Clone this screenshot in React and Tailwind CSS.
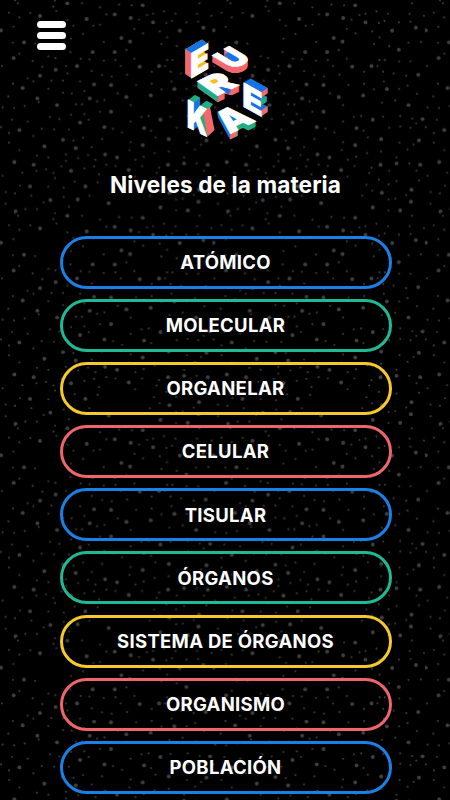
import React from 'react';

const NIVELES = [
    { id: 1, nombre: 'ATÓMICO', borde: 'border-[#1a80e6]' },
    { id: 2, nombre: 'MOLECULAR', borde: 'border-[#1fb993]' },
    { id: 3, nombre: 'ORGANELAR', borde: 'border-[#f5c92c]' },
    { id: 4, nombre: 'CELULAR', borde: 'border-[#ee666b]' },
    { id: 5, nombre: 'TISULAR', borde: 'border-[#1a80e6]' },
    { id: 6, nombre: 'ÓRGANOS', borde: 'border-[#1fb993]' },
    { id: 7, nombre: 'SISTEMA DE ÓRGANOS', borde: 'border-[#f5c92c]' },
    { id: 8, nombre: 'ORGANISMO', borde: 'border-[#ee666b]' },
    { id: 9, nombre: 'POBLACIÓN', borde: 'border-[#1a80e6]' },
];

// Estrellas de un mosaico de 637x637 (se dibuja a un tercio de escala)
const ESTRELLAS_GRANDES = [
    [202, 10], [428, 16], [120, 48], [344, 43], [260, 57], [392, 54], [3, 91], [364, 114], [390, 125], [72, 127],
    [278, 156], [344, 156], [41, 174], [231, 198], [419, 200], [167, 209], [120, 227], [282, 253], [333, 255], [68, 264],
    [379, 291], [269, 295], [112, 295], [171, 315], [333, 335], [240, 368], [313, 381], [58, 390], [432, 384], [189, 419],
    [428, 435], [133, 439], [227, 444], [315, 463], [351, 472], [43, 486], [101, 494], [213, 512], [386, 510], [90, 559],
    [256, 559], [151, 600], [233, 598], [326, 609], [47, 634], [459, 67], [539, 92], [610, 83], [559, 149], [477, 198],
    [617, 224], [523, 267], [452, 286], [588, 315], [481, 359], [630, 357], [506, 417], [619, 421], [504, 494], [552, 490],
    [623, 494], [508, 578], [597, 569], [481, 622], [563, 631], [595, 605],
];

const ESTRELLAS_CHICAS = [
    [54, 10], [45, 1], [165, 2], [160, 20], [169, 33], [246, 10], [27, 38], [58, 52], [91, 39], [202, 60],
    [220, 77], [300, 22], [319, 43], [357, 14], [395, 16], [300, 74], [280, 77], [403, 87], [417, 59], [441, 45],
    [429, 100], [249, 102], [213, 116], [40, 80], [39, 128], [105, 131], [58, 161], [98, 183], [145, 169], [166, 174],
    [211, 156], [242, 176], [268, 178], [311, 126], [379, 150], [403, 176], [346, 180], [311, 182], [198, 198], [127, 200],
    [6, 198], [202, 220], [275, 213], [306, 225], [335, 229], [362, 198], [381, 224], [83, 235], [100, 244], [39, 251],
    [154, 242], [189, 242], [240, 244], [145, 266], [253, 273], [189, 278], [215, 280], [25, 289], [116, 306], [8, 322],
    [42, 324], [74, 318], [228, 313], [246, 313], [291, 304], [313, 300], [353, 280], [408, 255], [392, 315], [213, 344],
    [253, 342], [300, 335], [36, 359], [83, 364], [150, 351], [178, 357], [266, 359], [424, 351], [446, 348], [392, 364],
    [3, 381], [125, 386], [162, 388], [207, 388], [339, 386], [366, 397], [27, 399], [100, 408], [220, 422], [249, 413],
    [306, 417], [27, 428], [275, 441], [58, 450], [111, 466], [145, 472], [198, 463], [198, 483], [234, 474], [264, 465],
    [286, 479], [184, 499], [138, 508], [109, 512], [67, 518], [8, 527], [160, 519], [165, 534], [253, 505], [282, 499],
    [319, 494], [346, 498], [297, 523], [388, 450], [392, 426], [406, 479], [426, 498], [431, 470], [405, 530], [224, 545],
    [293, 547], [60, 557], [145, 560], [191, 563], [191, 591], [94, 587], [17, 576], [45, 580], [268, 587], [17, 611],
    [131, 607], [207, 620], [76, 627], [111, 627], [459, 41], [492, 34], [526, 41], [559, 67], [516, 63], [499, 69],
    [479, 94], [501, 112], [484, 132], [530, 138], [588, 128], [625, 126], [591, 41], [594, 65], [598, 10], [634, 47],
    [560, 184], [594, 184], [501, 180], [517, 180], [495, 198], [512, 215], [455, 215], [543, 220], [581, 227], [455, 251],
    [514, 244], [484, 268], [560, 267], [585, 257], [613, 281], [548, 301], [508, 308], [512, 350], [563, 348], [530, 383],
    [563, 379], [594, 383], [599, 356], [611, 370], [453, 392], [466, 412], [561, 428], [506, 454], [464, 459], [552, 472],
    [585, 448], [603, 434], [590, 490], [477, 503], [470, 519], [530, 512], [612, 512], [552, 543], [499, 538], [528, 553],
    [462, 554], [619, 541], [581, 585], [449, 587], [528, 598], [548, 596], [479, 572], [528, 631],
];

const FondoEstrellas = () => (
    <svg className="absolute inset-0 h-full w-full" aria-hidden="true">
        <defs>
            <pattern id="estrellas" width="637" height="637" patternUnits="userSpaceOnUse" patternTransform="scale(0.3335)">
                {ESTRELLAS_GRANDES.map(([x, y]) => (
                    <circle key={`g${x}-${y}`} cx={x} cy={y} r="5.8" fill="#3f3f3f" />
                ))}
                {ESTRELLAS_CHICAS.map(([x, y]) => (
                    <circle key={`c${x}-${y}`} cx={x} cy={y} r="3.2" fill="#383838" />
                ))}
            </pattern>
        </defs>
        <rect width="100%" height="100%" fill="url(#estrellas)" />
    </svg>
);

const AZUL = '#1573e6';
const ROJO = '#f4676c';
const VERDE = '#1fae83';
const AMARILLO = '#f3bf1b';

// Letra isométrica: origen = esquina inferior izquierda, ejeX = ancho, ejeY = alto hacia abajo
const Letra = ({ letra, origen, ejeX, ejeY, margen, ancho, fondo, lado, children }) => {
    const a = ejeX[0] / ancho;
    const b = ejeX[1] / ancho;
    const c = ejeY[0] / 72.7;
    const d = ejeY[1] / 72.7;
    const e = origen[0] - a * margen;
    const f = origen[1] - b * margen;
    const capas = [];
    for (let t = 1; t > 0; t -= 0.08) {
        capas.push(t);
    }
    return (
        <g fontFamily="Inter, sans-serif" fontSize="100" fontWeight="900">
            {capas.map((t) => (
                <text key={t} fill={lado} transform={`matrix(${a} ${b} ${c} ${d} ${e + fondo[0] * t} ${f + fondo[1] * t})`}>
                    {letra}
                </text>
            ))}
            {children}
            <text fill="#ffffff" stroke="#ffffff" strokeWidth="2" transform={`matrix(${a} ${b} ${c} ${d} ${e} ${f})`}>{letra}</text>
        </g>
    );
};

const Logo = () => (
    <svg className="h-[110px] w-[92px] overflow-visible" viewBox="180 34 92 110" role="img" aria-label="Eureka">
        <Letra letra="U" origen={[234.5, 69]} ejeX={[18, -10]} ejeY={[22.5, 13.5]} margen={5} ancho={66} fondo={[0, 6.5]} lado={ROJO}>
            <polygon points="224,55 229,52 243,60 237,64" fill={AZUL} />
        </Letra>
        <Letra letra="E" origen={[191.7, 78]} ejeX={[16, -9.3]} ejeY={[0, 25]} margen={5.5} ancho={51} fondo={[-6, -4]} lado={AMARILLO}>
            <polygon points="185.3,49.3 191.9,53 191.9,78 185.3,74" fill={ROJO} />
            <polygon points="185.3,49.3 202,39.6 207.7,43.7 191.7,53" fill={AZUL} />
        </Letra>
        <Letra letra="R" origen={[218, 95.5]} ejeX={[22.5, -11]} ejeY={[20.3, 14.5]} margen={5.5} ancho={63} fondo={[0, 6.5]} lado={ROJO}>
            <polygon points="197.7,81 218.2,95.5 218.2,102 197.7,87.5" fill={VERDE} />
            <polygon points="206,81 213,76 220,80 213,85" fill={AMARILLO} />
            <polygon points="219,88.5 225,85 231,90.5 228.3,94.5" fill={AZUL} />
        </Letra>
        <Letra letra="E" origen={[244, 107]} ejeX={[17, 9.5]} ejeY={[0, 24]} margen={5.5} ancho={51} fondo={[6.5, -4.5]} lado={AZUL}>
            <polygon points="261,92.5 267.5,88 267.5,93.5 261,98" fill={ROJO} />
            <polygon points="259,100.5 266.5,96 266.5,102 259,106.5" fill={VERDE} />
            <polygon points="261,110.5 267.5,106 267.5,112 261,116.5" fill={ROJO} />
        </Letra>
        <Letra letra="K" origen={[188.3, 127.5]} ejeX={[19, 9.5]} ejeY={[0, 27.5]} margen={5.5} ancho={70} fondo={[6.5, -5]} lado={VERDE}>
            <polygon points="193.5,103 200,98.5 200,110 193.5,114" fill={AZUL} />
            <polygon points="193.5,121 196.5,118 196.5,127 193.5,130" fill={AZUL} />
            <polygon points="203,112 210,107 214.5,130 207.5,136.5" fill={ROJO} />
        </Letra>
        <Letra letra="A" origen={[230, 134]} ejeX={[26, -13]} ejeY={[20, 18]} margen={1} ancho={77} fondo={[0, 5.5]} lado={VERDE}>
            <polygon points="217,111 230,134 230,139.5 218,117" fill={AZUL} />
            <polygon points="230,134 237,130.5 237,136 230,139.5" fill={ROJO} />
            <polygon points="226,114 232,113 239,120 232,123" fill={AZUL} />
        </Letra>
    </svg>
);

const BotonMenu = () => (
    <button type="button" aria-label="Menú" className="mt-[21px] ml-[37px] flex w-[29px] flex-col gap-[3.5px]">
        <span className="h-[7.3px] w-full rounded-full bg-white"></span>
        <span className="h-[7.3px] w-full rounded-full bg-white"></span>
        <span className="h-[7.3px] w-full rounded-full bg-white"></span>
    </button>
);

export default function App() {
    return (
        <div className="relative h-[800px] w-[450px] overflow-hidden bg-black font-['Inter',sans-serif] text-white">
            <FondoEstrellas />
            <div className="relative flex flex-col">
                <header className="flex h-[144px] items-start">
                    <BotonMenu />
                    <div className="mt-[34px] ml-[114px]">
                        <Logo />
                    </div>
                </header>

                <h1 className="mt-[25px] pl-px text-center text-[22.6px] leading-8 font-bold tracking-[0.1px]">Niveles de la materia</h1>

                {/* Lista de niveles */}
                <main className="mt-[35px] ml-[59.5px] flex w-[332px] flex-col gap-[10.1px]">
                    {NIVELES.map((nivel) => (
                        <button
                            key={nivel.id}
                            type="button"
                            className={`flex h-[53px] shrink-0 items-center justify-center rounded-full border-3 pt-px text-[18.5px] font-bold tracking-[0.3px] ${nivel.borde}`}
                        >
                            {nivel.nombre}
                        </button>
                    ))}
                </main>
            </div>
        </div>
    );
}
